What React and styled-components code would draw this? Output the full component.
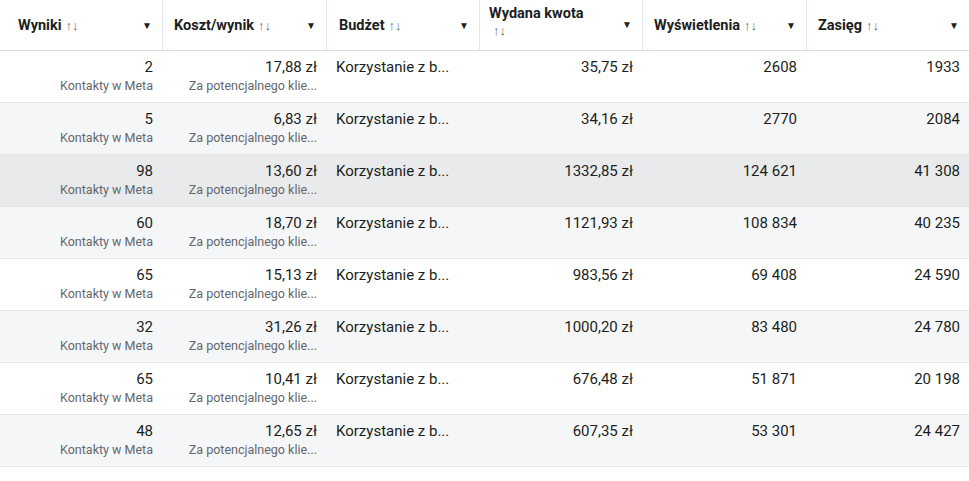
import React from "react";
import styled, { createGlobalStyle } from "styled-components";

const G = createGlobalStyle`
  body { margin:0; background:#fff; font-family: Roboto, "Noto Sans", sans-serif; color:#1c1e21; }
`;
const cols = "162px 164px 153px 163px 164px 163px";
const Table = styled.div`width:969px;`;
const Head = styled.div`
  display:grid; grid-template-columns:${cols}; height:50px; border-bottom:1px solid #dadde1;
`;
const HCell = styled.div`
  display:flex; justify-content:space-between; align-items:${p=>p.$top?"flex-start":"center"};
  padding:${p=>p.$top?"5px 10px 0 9px":"0 10px 0 18px"};
  border-left:${p=>p.$first?"none":"1px solid #e4e6eb"};
  font-weight:700; font-size:14.5px; color:#1c1e21; box-sizing:border-box;
  ${p=>p.$pl!=null?`padding-left:${p.$pl}px;`:""}
`;
const Sort = styled.span`font-weight:400; font-size:13px; color:#65676b; margin-left:4px;`;
const Caret = styled.span`font-size:10px; color:#1c1e21; ${p=>p.$mt?"margin-top:14px;":""}`;
const Row = styled.div`
  display:grid; grid-template-columns:${cols}; height:51px; border-bottom:1px solid #e4e6eb;
  background:${p=>p.$bg};
`;
const Cell = styled.div`
  display:flex; flex-direction:column; align-items:${p=>p.$left?"flex-start":"flex-end"};
  padding:${p=>p.$left?"6px 0 0 10px":"6px 9px 0 0"}; box-sizing:border-box;
`;
const Main = styled.div`font-size:15px; line-height:20px; white-space:nowrap;`;
const Sub = styled.div`font-size:12.5px; color:#65676b; line-height:18px; white-space:nowrap;`;

const data = [
  ["2","17,88 zł","35,75 zł","2608","1933"],
  ["5","6,83 zł","34,16 zł","2770","2084"],
  ["98","13,60 zł","1332,85 zł","124 621","41 308"],
  ["60","18,70 zł","1121,93 zł","108 834","40 235"],
  ["65","15,13 zł","983,56 zł","69 408","24 590"],
  ["32","31,26 zł","1000,20 zł","83 480","24 780"],
  ["65","10,41 zł","676,48 zł","51 871","20 198"],
  ["48","12,65 zł","607,35 zł","53 301","24 427"],
];

export default function App(){
  return <Table><G/>
    <Head>
      <HCell $first><span>Wyniki<Sort>↑↓</Sort></span><Caret>▼</Caret></HCell>
      <HCell $pl={11}><span>Koszt/wynik<Sort>↑↓</Sort></span><Caret>▼</Caret></HCell>
      <HCell $pl={12}><span>Budżet<Sort>↑↓</Sort></span><Caret>▼</Caret></HCell>
      <HCell $top><span>Wydana kwota<br/><Sort style={{marginLeft:4}}>↑↓</Sort></span><Caret $mt>▼</Caret></HCell>
      <HCell $pl={11}><span>Wyświetlenia<Sort>↑↓</Sort></span><Caret>▼</Caret></HCell>
      <HCell $pl={11}><span>Zasięg<Sort>↑↓</Sort></span><Caret>▼</Caret></HCell>
    </Head>
    {data.map((d,i)=>(
      <Row key={i} $bg={i===2?"#e9eaeb":i%2?"#f5f6f7":"#fff"}>
        <Cell><Main>{d[0]}</Main><Sub>Kontakty w Meta</Sub></Cell>
        <Cell><Main>{d[1]}</Main><Sub>Za potencjalnego klie...</Sub></Cell>
        <Cell $left><Main>Korzystanie z b...</Main></Cell>
        <Cell><Main>{d[2]}</Main></Cell>
        <Cell><Main>{d[3]}</Main></Cell>
        <Cell><Main>{d[4]}</Main></Cell>
      </Row>
    ))}
  </Table>;
}
